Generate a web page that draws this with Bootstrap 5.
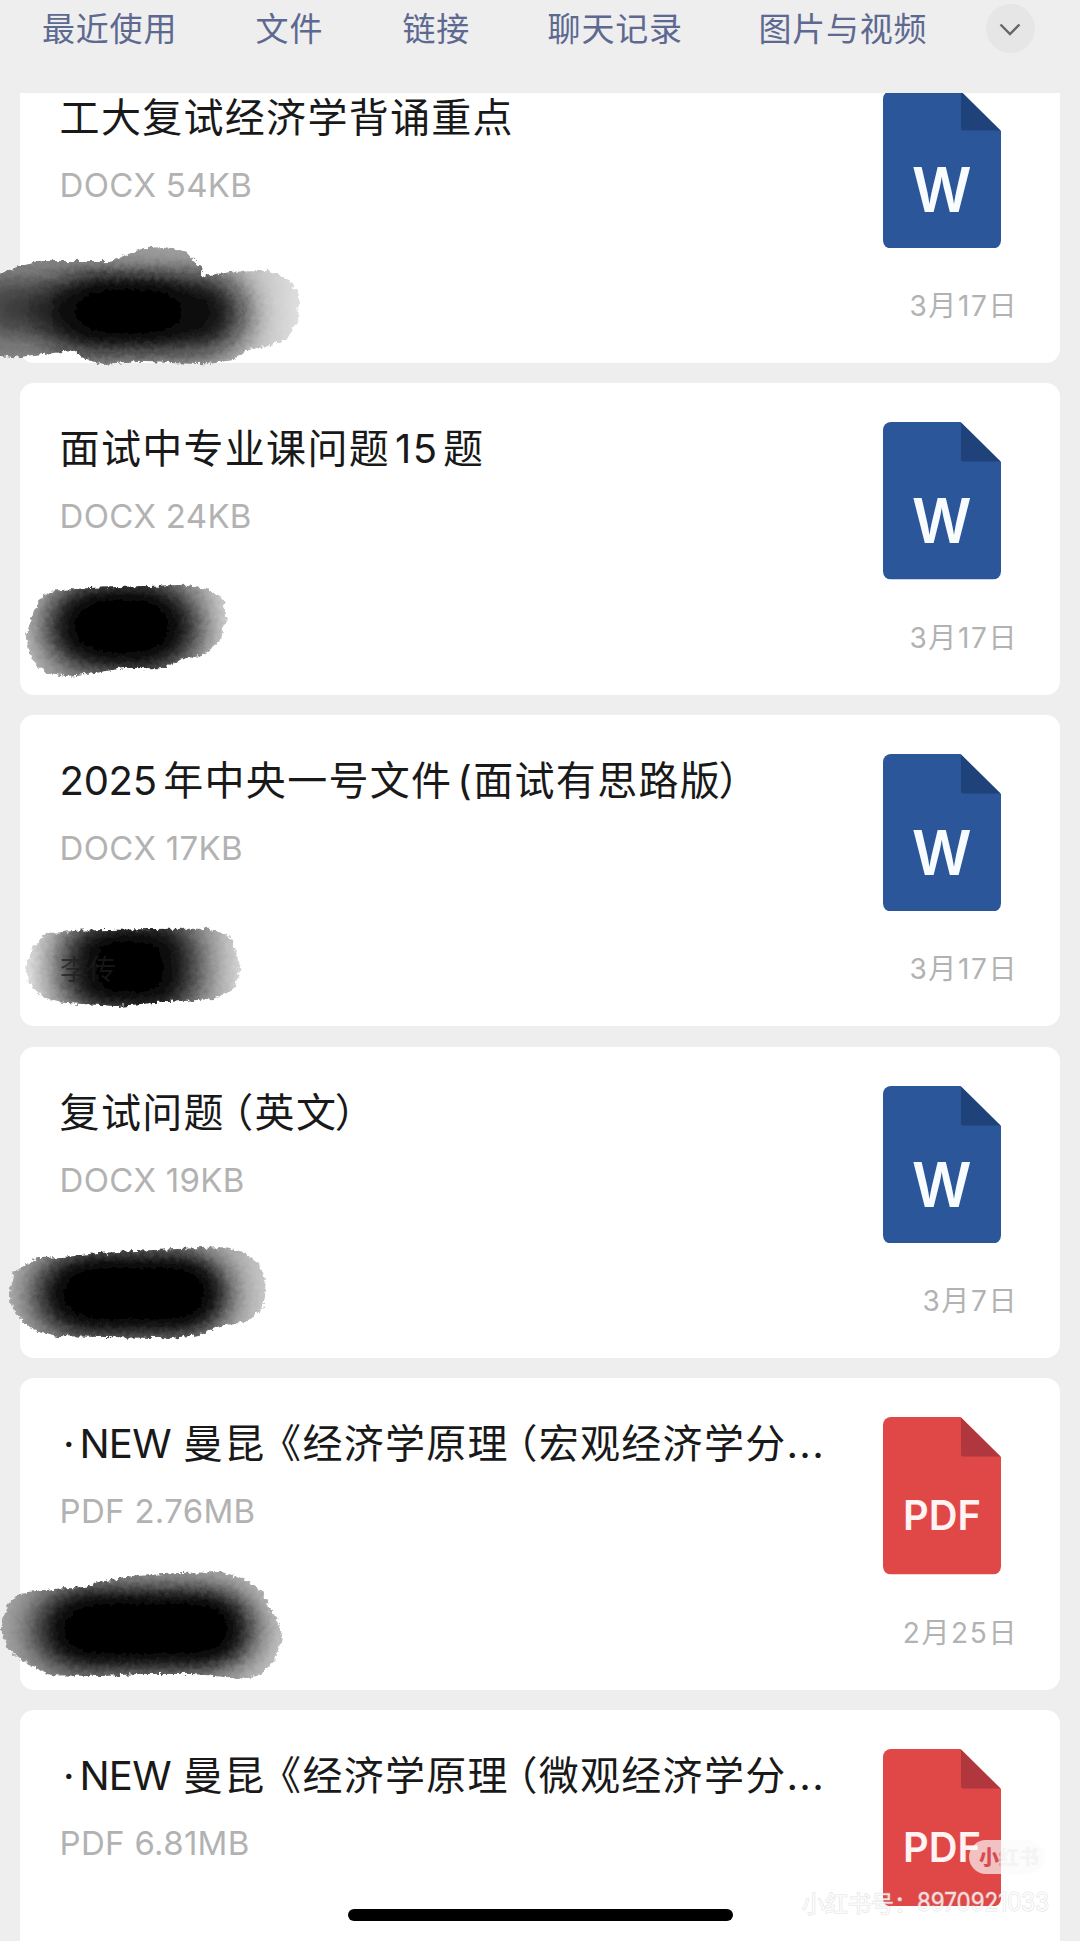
<!DOCTYPE html>
<html lang="zh-CN">
<head>
<meta charset="utf-8">
<meta name="viewport" content="width=device-width, initial-scale=1">
<title>文件</title>
<link href="https://cdn.jsdelivr.net/npm/bootstrap@5.3.0/dist/css/bootstrap.min.css" rel="stylesheet">
<style>
body{width:1080px;height:1941px;overflow:hidden;background:#eee;font-family:Inter,"Noto Sans CJK SC",sans-serif;color:#191919}
.tabs-bar{height:92.5px;padding:4px 44px 0 42px;gap:77.6px}
.tab-item{font-size:33px;letter-spacing:.8px;line-height:50px;color:#5d6990;white-space:nowrap}
.tab-file{padding-left:.8px}
.tab-link{padding-left:1.6px}
.tab-media{margin-left:-2px}
.tab-more{width:49px;height:49px;border-radius:50%;background:#e6e6e6;margin-left:-19px}
.file-list{height:1848.5px;padding:0 20px 0 19.6px;gap:20.2px}
.file-item{height:311.5px;border-radius:14px;background:#fff;padding:39px 42px 0 40px}
.file-item:first-child{margin-top:-41px}
.file-title{font-size:40px;letter-spacing:1.3px;line-height:52px;padding-top:1px;white-space:nowrap}
.file-meta{font-size:33px;line-height:40px;color:#b2b2b2;margin-top:21px;letter-spacing:.3px}
.file-date{font-size:28px;line-height:36px;color:#b2b2b2;margin-top:40px;letter-spacing:1.6px}
.file-icon{width:118px;height:157.5px;margin-right:16.6px;display:block}
.p-open{margin-left:-11.5px}.p-book{margin-left:-4.5px}.p-half{margin-left:5px}.p-close{margin-left:-2.5px}
.num{letter-spacing:-.3px;margin-right:6.5px}
.num-short{letter-spacing:1.4px;margin-left:5px;margin-right:4.5px}
.dot-mark{margin-left:3.5px;margin-right:3.5px}
.num-new{letter-spacing:-.7px;margin-right:-.5px}
.overlay{left:0;top:0;pointer-events:none}
.home-bar{left:348px;top:1909px;width:385px;height:12px;border-radius:6px;background:#000}
</style>
<script src="https://cdn.jsdelivr.net/npm/bootstrap@5.3.0/dist/js/bootstrap.bundle.min.js"></script>
</head>
<body class="position-relative">
<svg width="0" height="0" class="position-absolute">
<defs>
<symbol id="doc" viewBox="0 0 118 157.5"><path fill="#2b579a" d="M8 0H77.500L118 40V149.500a8 8 0 0 1-8 8H8a8 8 0 0 1-8-8V8a8 8 0 0 1 8-8z"/><path fill="#20427a" d="M78 0.500L117.500 39.500H80a2 2 0 0 1-2-2z"/><text x="29" y="120.500" font-family="Inter" font-weight="600" font-size="61.500" fill="#f8fcff" textLength="59.500" lengthAdjust="spacingAndGlyphs">W</text></symbol>
<symbol id="pdf" viewBox="0 0 118 157.5"><path fill="#e04848" d="M8 0H77.500L118 40V149.500a8 8 0 0 1-8 8H8a8 8 0 0 1-8-8V8a8 8 0 0 1 8-8z"/><path fill="#b0373d" d="M78 0.500L117.500 39.500H80a2 2 0 0 1-2-2z"/><text x="20" y="112.500" font-family="Inter" font-weight="600" font-size="41" fill="#fff3f3" textLength="78" lengthAdjust="spacingAndGlyphs">PDF</text></symbol>
</defs>
</svg>

<nav class="tabs-bar d-flex align-items-start">
<span class="tab-item">最近使用</span><span class="tab-item tab-file">文件</span><span class="tab-item tab-link">链接</span><span class="tab-item">聊天记录</span><span class="tab-item tab-media">图片与视频</span>
<span class="tab-more d-flex align-items-center justify-content-center flex-shrink-0"><svg width="24" height="16" viewBox="0 0 24 16"><path d="M2.500 3.500L12 13L21.500 3.500" fill="none" stroke="#666" stroke-width="2.400"/></svg></span>
</nav>

<main class="file-list d-flex flex-column overflow-hidden">
<article class="file-item flex-shrink-0 d-flex justify-content-between">
<div><div class="file-title">工大复试经济学背诵重点</div><div class="file-meta">DOCX 54KB</div></div>
<div class="d-flex flex-column align-items-end"><svg class="file-icon"><use href="#doc"/></svg><div class="file-date">3月17日</div></div>
</article>
<article class="file-item flex-shrink-0 d-flex justify-content-between">
<div><div class="file-title">面试中专业课问题<span class="num-short">15</span>题</div><div class="file-meta">DOCX 24KB</div></div>
<div class="d-flex flex-column align-items-end"><svg class="file-icon"><use href="#doc"/></svg><div class="file-date">3月17日</div></div>
</article>
<article class="file-item flex-shrink-0 d-flex justify-content-between">
<div><div class="file-title"><span class="num">2025</span>年中央一号文件<span class="p-half">(</span>面试有思路版<span class="p-close">）</span></div><div class="file-meta">DOCX 17KB</div></div>
<div class="d-flex flex-column align-items-end"><svg class="file-icon"><use href="#doc"/></svg><div class="file-date">3月17日</div></div>
</article>
<article class="file-item flex-shrink-0 d-flex justify-content-between">
<div><div class="file-title">复试问题<span class="p-open">（</span>英文<span class="p-close">）</span></div><div class="file-meta">DOCX 19KB</div></div>
<div class="d-flex flex-column align-items-end"><svg class="file-icon"><use href="#doc"/></svg><div class="file-date">3月7日</div></div>
</article>
<article class="file-item flex-shrink-0 d-flex justify-content-between">
<div><div class="file-title"><span class="dot-mark">·</span><span class="num-new">NEW</span> 曼昆<span class="p-book">《</span>经济学原理<span class="p-open">（</span>宏观经济学分...</div><div class="file-meta">PDF 2.76MB</div></div>
<div class="d-flex flex-column align-items-end"><svg class="file-icon"><use href="#pdf"/></svg><div class="file-date">2月25日</div></div>
</article>
<article class="file-item flex-shrink-0 d-flex justify-content-between">
<div><div class="file-title"><span class="dot-mark">·</span><span class="num-new">NEW</span> 曼昆<span class="p-book">《</span>经济学原理<span class="p-open">（</span>微观经济学分...</div><div class="file-meta">PDF 6.81MB</div></div>
<div class="d-flex flex-column align-items-end"><svg class="file-icon"><use href="#pdf"/></svg></div>
</article>
</main>

<!-- brush strokes that cover the sender names -->
<svg class="overlay position-absolute" width="1080" height="1941" viewBox="0 0 1080 1941">
<defs>
<filter id="rough" x="-5%" y="-10%" width="110%" height="120%"><feTurbulence type="fractalNoise" baseFrequency=".2" numOctaves="4" seed="4"/><feDisplacementMap in="SourceGraphic" scale="7" xChannelSelector="R" yChannelSelector="G"/><feGaussianBlur stdDeviation=".4"/></filter>
<filter id="soft" x="-60%" y="-80%" width="220%" height="260%"><feGaussianBlur stdDeviation="52 38"/></filter>
<filter id="core" x="-60%" y="-80%" width="220%" height="260%"><feGaussianBlur stdDeviation="40 28"/></filter>
<linearGradient id="g1"><stop offset="0" stop-color="#808080"/><stop offset=".45" stop-color="#999"/><stop offset=".7" stop-color="#a4a4a4"/><stop offset=".88" stop-color="#c8c8c8"/><stop offset="1" stop-color="#dedede"/></linearGradient>
<linearGradient id="g2"><stop offset="0" stop-color="#c0c0c0"/><stop offset=".25" stop-color="#8c8c8c"/><stop offset=".6" stop-color="#666"/><stop offset="1" stop-color="#d0d0d0"/></linearGradient>
<linearGradient id="g3"><stop offset="0" stop-color="#e0e0e0"/><stop offset=".3" stop-color="#777"/><stop offset=".65" stop-color="#555"/><stop offset="1" stop-color="#d4d4d4"/></linearGradient>
<linearGradient id="g4"><stop offset="0" stop-color="#b0b0b0"/><stop offset=".3" stop-color="#808080"/><stop offset=".65" stop-color="#888"/><stop offset="1" stop-color="#c8c8c8"/></linearGradient>
<linearGradient id="g5"><stop offset="0" stop-color="#a4a4a4"/><stop offset=".3" stop-color="#8a8a8a"/><stop offset=".65" stop-color="#999"/><stop offset="1" stop-color="#c4c4c4"/></linearGradient>
<path id="b1" d="M-40 150L0 130L60 108L130 93L330 93L350 85L430 55L500 50L560 68L600 110L610 138L700 125L810 122L870 150L897 200L895 270L860 330L740 362L700 390L620 403L530 400L420 395L310 405L250 385L225 362L100 375L40 385L-40 370z"/>
<path id="b2" d="M150 632L260 624L540 614L600 624L648 660L658 710L640 785L590 825L520 840L470 865L360 864L270 880L190 888L130 876L90 835L74 770L100 690L118 650z"/>
<path id="b3" d="M95 700L160 692L340 686L430 686L470 705L490 760L496 810L482 865L440 897L350 905L240 918L130 908L85 890L60 850L54 800L68 740z"/>
<path id="b4" d="M110 655L200 650L290 640L460 630L660 622L730 636L780 675L800 735L790 800L740 845L650 860L600 885L500 895L280 890L170 888L90 865L45 820L25 765L40 700z"/>
<path id="b5" d="M60 668L180 655L240 655L290 635L400 618L500 610L640 606L700 622L760 665L780 710L810 755L818 810L795 875L750 918L690 924L560 912L400 912L300 918L150 916L80 885L25 840L2 780L20 705z"/>
<clipPath id="c1"><use href="#b1"/></clipPath><clipPath id="c2"><use href="#b2"/></clipPath><clipPath id="c3"><use href="#b3"/></clipPath><clipPath id="c4"><use href="#b4"/></clipPath><clipPath id="c5"><use href="#b5"/></clipPath>
<linearGradient id="redfade" gradientUnits="userSpaceOnUse" x1="979" x2="1004" y1="0" y2="0"><stop offset=".8" stop-color="#d64a50"/><stop offset=".9" stop-color="#f4f4f4"/></linearGradient>
</defs>
<g filter="url(#rough)"><g transform="translate(0 230) scale(.3333)"><use href="#b1" fill="url(#g1)"/><g clip-path="url(#c1)"><g filter="url(#soft)"><rect x="-60" y="155" width="300" height="160" rx="60" fill="#222" opacity=".75"/><rect x="120" y="135" width="610" height="230" rx="115" fill="#0a0a0a"/></g><rect x="220" y="155" width="330" height="170" rx="85" filter="url(#core)"/></g></g></g>
<g filter="url(#rough)"><g transform="translate(0 380) scale(.3443 .3333)"><use href="#b2" fill="url(#g2)"/><g clip-path="url(#c2)"><g filter="url(#soft)"><rect x="140" y="625" width="430" height="230" rx="110"/></g><rect x="220" y="645" width="260" height="190" rx="95" filter="url(#core)"/></g></g></g>
<g filter="url(#rough)"><g transform="translate(0 700) scale(.4847 .3333)"><use href="#b3" fill="url(#g3)"/><g clip-path="url(#c3)"><g filter="url(#core)"><rect x="140" y="680" width="250" height="240" rx="80" fill="#050505"/><rect x="200" y="700" width="140" height="200" rx="70"/></g></g></g></g>
<text x="60" y="980" font-size="28" font-family="Noto Sans CJK SC" fill="#1e1e1e" opacity=".7">李传</text>
<g filter="url(#rough)"><g transform="translate(0 1040) scale(.3333)"><use href="#b4" fill="url(#g4)"/><g clip-path="url(#c4)"><g filter="url(#soft)"><rect x="110" y="650" width="570" height="225" rx="110"/></g><rect x="200" y="665" width="430" height="185" rx="90" filter="url(#core)"/></g></g></g>
<g filter="url(#rough)"><g transform="translate(0 1370) scale(.3443 .3333)"><use href="#b5" fill="url(#g5)"/><g clip-path="url(#c5)"><g filter="url(#soft)"><rect x="105" y="660" width="630" height="235" rx="115"/></g><rect x="200" y="690" width="470" height="170" rx="85" fill="#030303" filter="url(#core)"/></g></g></g>
<!-- share badge and account number -->
<rect x="969" y="1840" width="76" height="34" rx="17" fill="#fafafa" fill-opacity=".68"/>
<text x="979" y="1865" font-size="20" font-weight="900" font-family="Noto Sans CJK SC" fill="url(#redfade)">小红书</text>
<g font-size="23" font-family="Inter, Noto Sans CJK SC" fill="#fff" fill-opacity=".8" stroke="#c8c8c8" stroke-opacity=".5" stroke-width="1.200" paint-order="stroke"><text x="802" y="1912">小红书号：</text><text x="917" y="1911" font-size="25" textLength="132" lengthAdjust="spacingAndGlyphs">8970921033</text></g>
</svg>
<div class="home-bar position-absolute"></div>
</body>
</html>
